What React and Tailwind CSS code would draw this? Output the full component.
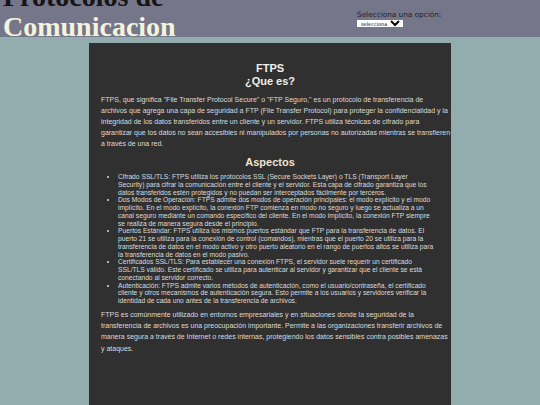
import { useState } from 'react';

const intro = [
  'FTPS, que significa "File Transfer Protocol Secure" o "FTP Seguro," es un protocolo de transferencia de',
  'archivos que agrega una capa de seguridad a FTP (File Transfer Protocol) para proteger la confidencialidad y la',
  'integridad de los datos transferidos entre un cliente y un servidor. FTPS utiliza técnicas de cifrado para',
  'garantizar que los datos no sean accesibles ni manipulados por personas no autorizadas mientras se transfieren',
  'a través de una red.',
];

const aspectos = [
  [
    'Cifrado SSL/TLS: FTPS utiliza los protocolos SSL (Secure Sockets Layer) o TLS (Transport Layer',
    'Security) para cifrar la comunicación entre el cliente y el servidor. Esta capa de cifrado garantiza que los',
    'datos transferidos estén protegidos y no puedan ser interceptados fácilmente por terceros.',
  ],
  [
    'Dos Modos de Operación: FTPS admite dos modos de operación principales: el modo explícito y el modo',
    'implícito. En el modo explícito, la conexión FTP comienza en modo no seguro y luego se actualiza a un',
    'canal seguro mediante un comando específico del cliente. En el modo implícito, la conexión FTP siempre',
    'se realiza de manera segura desde el principio.',
  ],
  [
    'Puertos Estándar: FTPS utiliza los mismos puertos estándar que FTP para la transferencia de datos. El',
    'puerto 21 se utiliza para la conexión de control (comandos), mientras que el puerto 20 se utiliza para la',
    'transferencia de datos en el modo activo y otro puerto aleatorio en el rango de puertos altos se utiliza para',
    'la transferencia de datos en el modo pasivo.',
  ],
  [
    'Certificados SSL/TLS: Para establecer una conexión FTPS, el servidor suele requerir un certificado',
    'SSL/TLS válido. Este certificado se utiliza para autenticar al servidor y garantizar que el cliente se está',
    'conectando al servidor correcto.',
  ],
  [
    'Autenticación: FTPS admite varios métodos de autenticación, como el usuario/contraseña, el certificado',
    'cliente y otros mecanismos de autenticación segura. Esto permite a los usuarios y servidores verificar la',
    'identidad de cada uno antes de la transferencia de archivos.',
  ],
];

const cierre = [
  'FTPS es comúnmente utilizado en entornos empresariales y en situaciones donde la seguridad de la',
  'transferencia de archivos es una preocupación importante. Permite a las organizaciones transferir archivos de',
  'manera segura a través de Internet o redes internas, protegiendo los datos sensibles contra posibles amenazas',
  'y ataques.',
];

function Lines({ lines }) {
  return lines.map((line, i) => (
    <span key={i} className="block whitespace-nowrap">
      {line}
    </span>
  ));
}

export default function App() {
  const [opcion, setOpcion] = useState('');

  return (
    <div className="min-h-screen bg-[#93adaf]">
      <header className="flex h-[37px] bg-[#76768a]">
        <h1 className="mt-[-18px] w-[357px] shrink-0 pl-[3px] font-['Liberation_Serif',serif] text-[28px] font-bold leading-[30px]">
          <span className="block text-[#151515]">Protocolos de</span>
          <span className="block text-[#f4f3dc]">Comunicacion</span>
        </h1>
        <div className="pt-[10px] font-['DejaVu_Sans',sans-serif] text-[7.3px] leading-[9px] text-[#1e1e28]">
          <label className="block">Selecciona una opción:</label>
          <select
            value={opcion}
            onChange={(e) => setOpcion(e.target.value)}
            className="mt-[1px] block h-[7px] w-[46px] bg-white text-[5px] leading-[6px] text-black"
          >
            <option value="">seleccionar</option>
            <option value="ftp">FTP</option>
            <option value="ftps">FTPS</option>
            <option value="sftp">SFTP</option>
          </select>
        </div>
      </header>

      <main className="mx-auto mt-[6px] w-[362px] bg-[#303030] px-[12px] pb-16 pt-[19px] font-['Liberation_Sans',Arial,sans-serif] text-[#dcdcdc]">
        <h2 className="text-center text-[11px] font-bold leading-[13px] text-[#f2f0ea]">
          FTPS
          <br />
          ¿Que es?
        </h2>
        <p className="mt-[6px] text-[7px] leading-[11px]">
          <Lines lines={intro} />
        </p>

        <h3 className="mt-[7px] text-center text-[11px] font-bold leading-[13px] text-[#f1e3cd]">Aspectos</h3>
        <ul className="mt-[4px] list-disc pl-[17px] text-[6.7px] leading-[7.75px]">
          {aspectos.map((item) => (
            <li key={item[0]}>
              <Lines lines={item} />
            </li>
          ))}
        </ul>

        <p className="mt-[4px] text-[7px] leading-[11.3px]">
          <Lines lines={cierre} />
        </p>
      </main>
    </div>
  );
}
